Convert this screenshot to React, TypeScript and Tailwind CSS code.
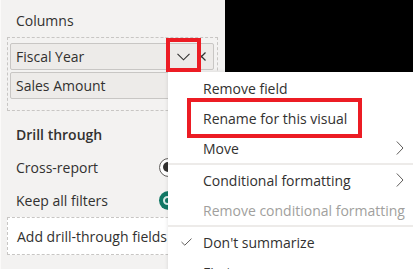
function ChevronDown() {
  return (
    <svg width="13" height="8" viewBox="0 0 13 8" fill="none" className="shrink-0">
      <path d="M0.5 0.8 L6.5 6.8 L12.5 0.8" stroke="#323130" strokeWidth="1.1" />
    </svg>
  );
}

function CloseX() {
  return (
    <svg width="9" height="9" viewBox="0 0 9 9" fill="none" className="shrink-0">
      <path d="M0.5 0.5 L8.5 8.5 M8.5 0.5 L0.5 8.5" stroke="#323130" strokeWidth="1.2" />
    </svg>
  );
}

function ChevronRight() {
  return (
    <svg width="8" height="14" viewBox="0 0 8 14" fill="none" className="shrink-0">
      <path d="M0.8 0.5 L7 7 L0.8 13.5" stroke="#605e5c" strokeWidth="1" />
    </svg>
  );
}

function Check() {
  return (
    <svg width="11" height="8" viewBox="0 0 11 8" fill="none">
      <path d="M0.5 4 L3.8 7.2 L10.5 0.6" stroke="#605e5c" strokeWidth="1" />
    </svg>
  );
}

function MenuItem({ label, disabled, sub, checked }: { label: string; disabled?: boolean; sub?: boolean; checked?: boolean }) {
  return (
    <div className={`h-[30px] flex items-center pr-[9px] ${disabled ? 'text-[#a19f9d]' : 'text-[#323130]'}`}>
      <div className="w-[35px] shrink-0 flex justify-center pl-[2px]">{checked && <Check />}</div>
      <span className="flex-1 whitespace-nowrap">{label}</span>
      {sub && <ChevronRight />}
    </div>
  );
}

function Toggle({ on }: { on?: boolean }) {
  if (on) {
    return (
      <div className="w-[40px] h-[19px] rounded-full bg-[#117865] flex items-center pl-[4px]">
        <div className="w-[9px] h-[9px] rounded-full border-2 border-[#d8ece8]" />
      </div>
    );
  }
  return (
    <div className="w-[40px] h-[19px] rounded-full bg-white border border-[#605e5c] flex items-center pl-[3px]">
      <div className="w-[10px] h-[10px] rounded-full bg-[#323130]" />
    </div>
  );
}

export default function App() {
  return (
    <div className="relative w-[413px] h-[269px] overflow-hidden flex font-['Segoe_UI','Open_Sans',sans-serif] text-[14px] text-[#323130]">
      <aside className="w-[225px] h-full shrink-0 bg-[#f3f2f1] border-l border-[#fbfaf9] pt-[10px]">
        <div className="h-[22px] leading-[22px] pl-[15px]">Columns</div>

        <div className="mt-[5px] ml-[6px] w-[211px] border border-dashed border-[#c8c6c4] pt-[5px] pl-[2px] pr-[3px] pb-[11px] flex flex-col gap-[2px]">
          <div className="h-[27px] bg-[#edebe9] border border-[#c8c6c4] rounded-[2px] flex items-center pl-[5px] pr-[5px]">
            <span className="flex-1">Fiscal Year</span>
            <div className="w-[22px] flex justify-center"><ChevronDown /></div>
            <div className="w-[14px] flex justify-center"><CloseX /></div>
          </div>
          <div className="h-[27px] bg-[#edebe9] border border-[#c8c6c4] rounded-[2px] flex items-center pl-[5px]">
            <span>Sales Amount</span>
          </div>
        </div>

        <div className="mt-[13px] h-[22px] leading-[22px] pl-[15px] font-semibold">Drill through</div>

        <div className="mt-[10px] h-[22px] flex items-center pl-[15px]">
          <span className="w-[143px]">Cross-report</span>
          <Toggle />
        </div>

        <div className="mt-[11px] h-[22px] flex items-center pl-[15px]">
          <span className="w-[143px]">Keep all filters</span>
          <Toggle on />
        </div>

        <div className="mt-[6px] ml-[6px] w-[211px] h-[38px] bg-white border border-dashed border-[#c8c6c4] flex items-center pl-[9px] whitespace-nowrap overflow-hidden">
          Add drill-through fields here
        </div>
      </aside>

      <div className="flex-1 bg-black" />

      {/* context menu */}
      <div className="absolute left-[168px] top-[72px] w-[245px] h-[200px] bg-white shadow-[0_0_4px_rgba(0,0,0,0.12)] pt-[1px]">
        <MenuItem label="Remove field" />
        <MenuItem label="Rename for this visual" />
        <MenuItem label="Move" sub />
        <div className="h-[2px] bg-[#edebe9]" />
        <MenuItem label="Conditional formatting" sub />
        <MenuItem label="Remove conditional formatting" disabled />
        <div className="h-[2px] bg-[#edebe9]" />
        <MenuItem label="Don't summarize" checked />
        <MenuItem label="First" />
      </div>

      {/* highlight annotations */}
      <div className="absolute left-[166px] top-[38px] w-[35px] h-[34px] border-4 border-[#ec1c24]" />
      <div className="absolute left-[187px] top-[98px] w-[175px] h-[40px] border-4 border-[#ec1c24]" />
    </div>
  );
}
